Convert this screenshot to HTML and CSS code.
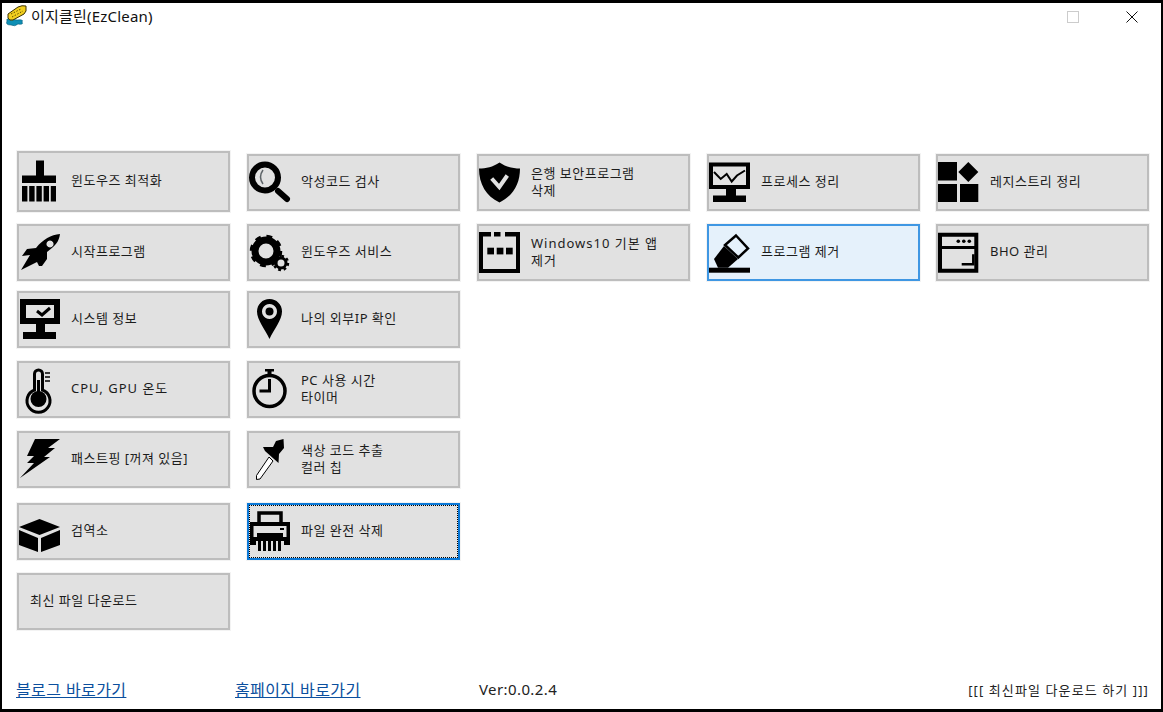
FILE: index.html
```html
<!DOCTYPE html>
<html lang="ko">
<head>
<meta charset="utf-8">
<title>이지클린(EzClean)</title>
<link rel="stylesheet" href="styles.css">
</head>
<body>
<div class="window">
  <header class="titlebar">
    <svg class="app-icon" viewBox="0 0 22 22"><path d="M2 16 Q1 13 5 14 L12 15 Q19 14 17 17 Q19 20 13 19 Q10 22 6 20 Q0 20 2 16Z" fill="#0e8fb5" stroke="#075a78" stroke-width=".6"/><path d="M3 9 L13 2 Q17 0 21 1 L21 6 L19 9 L8 15 Q4 16 3 13Z" fill="#f2cf1e" stroke="#3a3000" stroke-width="1"/><path d="M6 9 L16 4 M7 12 L18 6" stroke="#5c4d00" stroke-width="1" stroke-dasharray="1.5 1.5"/></svg>
    <span class="title">이지클린(EzClean)</span>
    <svg class="win-max" viewBox="0 0 12 12"><rect x=".5" y=".5" width="11" height="11" fill="none" stroke="#cccccc"/></svg>
    <svg class="win-close" viewBox="0 0 12 12"><path d="M.5 .5 L11.5 11.5 M11.5 .5 L.5 11.5" stroke="#111" stroke-width="1"/></svg>
  </header>

  <main class="columns">
    <div class="col">
      <button class="btn btn-tall"><svg class="ico" viewBox="0 0 48 48"><path d="M16 2.500h8V17.500h12V25H2V17.500h14z"/><path d="M2 28h5.400v15.500H2zM9.200 28h5.400v15.500H9.200zM16.400 28h5.400v15.500h-5.400zM23.600 28H29v15.500h-5.400zM30.800 28h5.200v15.500h-5.200z"/></svg><span class="label">윈도우즈 최적화</span></button>
      <button class="btn gap-12"><svg class="ico" viewBox="0 0 48 48"><path fill-rule="evenodd" d="M40 5C31 6 23 10 16 19L7 20L2 27L10 26L1 41L17 33L19 37L22 37L27 30L27 23C35 17 39 13 40 5ZM30 11.500a3.500 3.500 0 1 0 .01 0Z"/></svg><span class="label">시작프로그램</span></button>
      <button class="btn gap-10"><svg class="ico" viewBox="0 0 48 48"><path fill-rule="evenodd" d="M0 3H40V28H25V36H36V43H3V36H16V28H0ZM6 9V22H34V9Z"/><path d="M17 15L22 19L30 12" stroke-width="3" fill="none" stroke="#000"/></svg><span class="label">시스템 정보</span></button>
      <button class="btn gap-13"><svg class="ico" viewBox="0 0 48 48"><path d="M14.500 24V8a4 4 0 0 1 8 0V24a11.500 11.500 0 1 1-8 0Z" fill="none" stroke="#000" stroke-width="3"/><circle cx="18.500" cy="33" r="8"/><rect x="17" y="14" width="3" height="16"/><path d="M25 7h5M25 11h5M25 15h5" stroke="#000" stroke-width="1.500"/></svg><span class="label label-wide">CPU, GPU 온도</span></button>
      <button class="btn gap-13"><svg class="ico" viewBox="0 0 48 48"><path d="M15 3H40L28 12H35L24 21H30L0 42L14 27H7L14 20H7Z"/></svg><span class="label">패스트핑 [꺼져 있음]</span></button>
      <button class="btn gap-15"><svg class="ico" viewBox="0 0 48 48"><path d="M-1 19L19.500 11L40 19L19.500 27ZM-1 22L18 30V44L-1 37ZM21 30L40 22V37L21 44Z"/></svg><span class="label">검역소</span></button>
      <button class="btn gap-13"><span class="label label-plain">최신 파일 다운로드</span></button>
    </div>

    <div class="col col-inset">
      <button class="btn"><svg class="ico" viewBox="0 0 48 48"><circle cx="15" cy="18.500" r="13" fill="none" stroke="#000" stroke-width="6"/><path d="M28 32L37 40" stroke="#000" stroke-width="6" stroke-linecap="round"/><path d="M13 11Q8 18 13 25" fill="none" stroke="#5e6468" stroke-width="1.500"/></svg><span class="label">악성코드 검사</span></button>
      <button class="btn gap-13"><svg class="ico" viewBox="0 0 48 48"><circle cx="16" cy="22" r="11" fill="none" stroke="#000" stroke-width="7"/><circle cx="16" cy="22" r="14.500" fill="none" stroke="#000" stroke-width="3.500" stroke-dasharray="5.700 5.690"/><circle cx="31" cy="34" r="5" fill="none" stroke="#000" stroke-width="3"/><circle cx="31" cy="34" r="7" fill="none" stroke="#000" stroke-width="2.500" stroke-dasharray="2.750 2.750"/></svg><span class="label">윈도우즈 서비스</span></button>
      <button class="btn gap-10"><svg class="ico" viewBox="0 0 48 48"><path fill-rule="evenodd" d="M19.500 3C12.500 3 7 8.500 7 15.500C7 24 15 33 19.500 43C24 33 32 24 32 15.500C32 8.500 26.500 3 19.500 3ZM19.500 8a7.500 7.500 0 1 1-.01 0Z"/><circle cx="19.500" cy="15.500" r="4"/></svg><span class="label">나의 외부IP 확인</span></button>
      <button class="btn gap-13"><svg class="ico" viewBox="0 0 48 48"><circle cx="19.500" cy="25" r="15.500" fill="none" stroke="#000" stroke-width="3.500"/><path d="M15 3h9v2.500h-2.500V9h-4V5.500H15z"/><path d="M19.500 13V25H9.500" fill="none" stroke="#000" stroke-width="3"/></svg><span class="label">PC 사용 시간<br>타이머</span></button>
      <button class="btn gap-13"><svg class="ico" viewBox="0 0 48 48"><path d="M19 21L23 25L10 43L6.500 43.500L6.500 39.500Z" fill="#fff" stroke="#000" stroke-width="1"/><path d="M33.500 3L26 5L23 11L13 11L15 15L24 23L28.500 27L29 18L34 12Z"/></svg><span class="label">색상 코드 추출<br>컬러 칩</span></button>
      <button class="btn btn-focus gap-15"><svg class="ico" viewBox="0 0 48 48"><path d="M9 16V5H31V16" fill="none" stroke="#000" stroke-width="3.500"/><path fill-rule="evenodd" d="M0 14H40V37H34V33H6V37H0ZM3.500 18V29H36.500V18Z"/><rect x="7" y="25" width="26" height="4"/><path d="M9.500 27V43M14.500 27V43M19.500 27V43M24.500 27V43M29.500 27V43" stroke="#000" stroke-width="3"/><rect x="30" y="20" width="4" height="2"/></svg><span class="label">파일 완전 삭제</span></button>
    </div>

    <div class="col col-inset">
      <button class="btn"><svg class="ico" viewBox="0 0 48 48"><path d="M19.500 3.500C26 8 33 9.500 40 9.500C40 25 33 37 19.500 43.500C6 37 -1 25 -1 9.500C6 9.500 13 8 19.500 3.500Z"/><path d="M11.700 19.500L19.300 28L27.300 16.500" fill="none" stroke="#e1e1e1" stroke-width="4"/></svg><span class="label">은행 보안프로그램<br>삭제</span></button>
      <button class="btn gap-13"><svg class="ico" viewBox="0 0 48 48"><path d="M-1 3H11V7.500H3V40H36V7.500H25V3H40V44H-1Z"/><rect x="14" y="3" width="6.500" height="4.500"/><rect x="7.300" y="18.700" width="6.700" height="6.700"/><rect x="16.700" y="18.700" width="6.700" height="6.700"/><rect x="26" y="18.700" width="6.700" height="6.700"/></svg><span class="label label-wide">Windows10 기본 앱<br>제거</span></button>
    </div>

    <div class="col col-inset">
      <button class="btn"><svg class="ico" viewBox="0 0 48 48"><path fill-rule="evenodd" d="M-1 3.500H40V30H26V36.500H36V43H3V36.500H16V30H-1ZM3 7.500V26H36V7.500Z"/><path d="M4 13L10.700 20L16.700 15L21.700 22.500L27 16.500L35 11.500" fill="none" stroke="#000" stroke-width="2"/></svg><span class="label">프로세스 정리</span></button>
      <button class="btn btn-hover gap-13"><svg class="ico" viewBox="0 0 48 48"><path d="M26 6.500L38 19.500L28.300 28.500L15 16Z" fill="none" stroke="#000" stroke-width="2.500"/><path d="M14 17L28 30L18 38.700H8L4 30Z"/><rect x="-1" y="38.700" width="41" height="5"/></svg><span class="label">프로그램 제거</span></button>
    </div>

    <div class="col col-inset col-last">
      <button class="btn"><svg class="ico" viewBox="0 0 48 48"><rect x="-1" y="3" width="19" height="18.500"/><path d="M29.300 3L39.300 13L29.300 23L19.300 13Z"/><rect x="-1" y="25" width="19" height="18"/><rect x="21" y="25" width="18.300" height="18"/></svg><span class="label">레지스트리 정리</span></button>
      <button class="btn gap-13"><svg class="ico" viewBox="0 0 48 48"><path fill-rule="evenodd" d="M-1 3.700H39.300V43.700H-1ZM3 7.700V17H35.300V7.700ZM3 20V39.700H35.300V20Z"/><circle cx="19.300" cy="12.300" r="1.800"/><circle cx="24.800" cy="12.300" r="1.800"/><circle cx="30.300" cy="12.300" r="1.800"/><path d="M22.700 35.300H34.300V25.300" fill="none" stroke="#000" stroke-width="2.500"/></svg><span class="label">BHO 관리</span></button>
    </div>
  </main>

  <footer class="footer">
    <a class="link" href="#">블로그 바로가기</a>
    <a class="link" href="#">홈페이지 바로가기</a>
    <span class="version">Ver:0.0.2.4</span>
    <span class="latest">[[[ 최신파일 다운로드 하기 ]]]</span>
  </footer>
</div>
</body>
</html>
```

FILE: styles.css
```css
* { box-sizing: border-box; }

html, body { margin: 0; padding: 0; }

body {
  width: 1163px;
  height: 712px;
  overflow: hidden;
  background: #fff;
  font-family: "Noto Sans", "Noto Sans CJK KR", sans-serif;
  color: #1c1c1c;
}

.window {
  width: 1163px;
  height: 712px;
  display: flex;
  flex-direction: column;
  border: solid #000;
  border-width: 3px 2px;
  background: #fff;
}

.titlebar {
  height: 26px;
  display: flex;
  align-items: center;
  padding-left: 3px;
  flex: none;
}

.app-icon { width: 22px; height: 22px; flex: none; }

.title {
  margin: 0 0 2px 4px;
  font-size: 15px;
  letter-spacing: .2px;
  color: #111;
  flex: 1;
}

.win-max { width: 12px; height: 12px; margin: 2px 47px 0 0; }
.win-close { width: 12px; height: 12px; margin: 2px 23px 0 0; }

.columns {
  flex: 1;
  display: flex;
  align-items: flex-start;
  gap: 17px;
  padding: 122px 0 0 15px;
}

.col {
  width: 213px;
  display: flex;
  flex-direction: column;
}

.col-inset { padding-top: 3px; }
.col-last { margin-left: -1px; }

.btn {
  width: 213px;
  height: 57px;
  display: flex;
  align-items: center;
  padding: 0 0 0 1px;
  font: inherit;
  font-size: 13px;
  line-height: 17px;
  letter-spacing: .5px;
  text-align: left;
  color: inherit;
  background: #e1e1e1;
  border: 2px solid #bdbdbd;
  box-shadow: 0 0 0 1px #f3f3f3;
  border-radius: 0;
}

.btn-tall { height: 61px; }
.btn-hover { background: #e5f1fb; border-color: #3f97e3; }
.btn-focus { border-color: #0a78d7; outline: 1px dotted #000; outline-offset: -3px; }

.gap-10 { margin-top: 10px; }
.gap-12 { margin-top: 12px; }
.gap-13 { margin-top: 13px; }
.gap-15 { margin-top: 15px; }

.ico { width: 48px; height: 48px; flex: none; overflow: visible; fill: #000; }
.label { margin: 0 0 2px 3px; }
.label-wide { letter-spacing: 1px; }
.label-plain { margin-left: 10px; }

.footer {
  flex: none;
  height: 38px;
  display: grid;
  grid-template-columns: 219px 244px 1fr auto;
  align-items: center;
  padding: 0 12px 2px 14px;
}

.link { font-size: 16px; letter-spacing: .4px; color: #0b4f9e; text-decoration: underline; justify-self: start; }
.version { font-size: 15px; letter-spacing: .4px; color: #222; }
.latest { font-size: 13px; letter-spacing: 1.1px; color: #222; }
```
